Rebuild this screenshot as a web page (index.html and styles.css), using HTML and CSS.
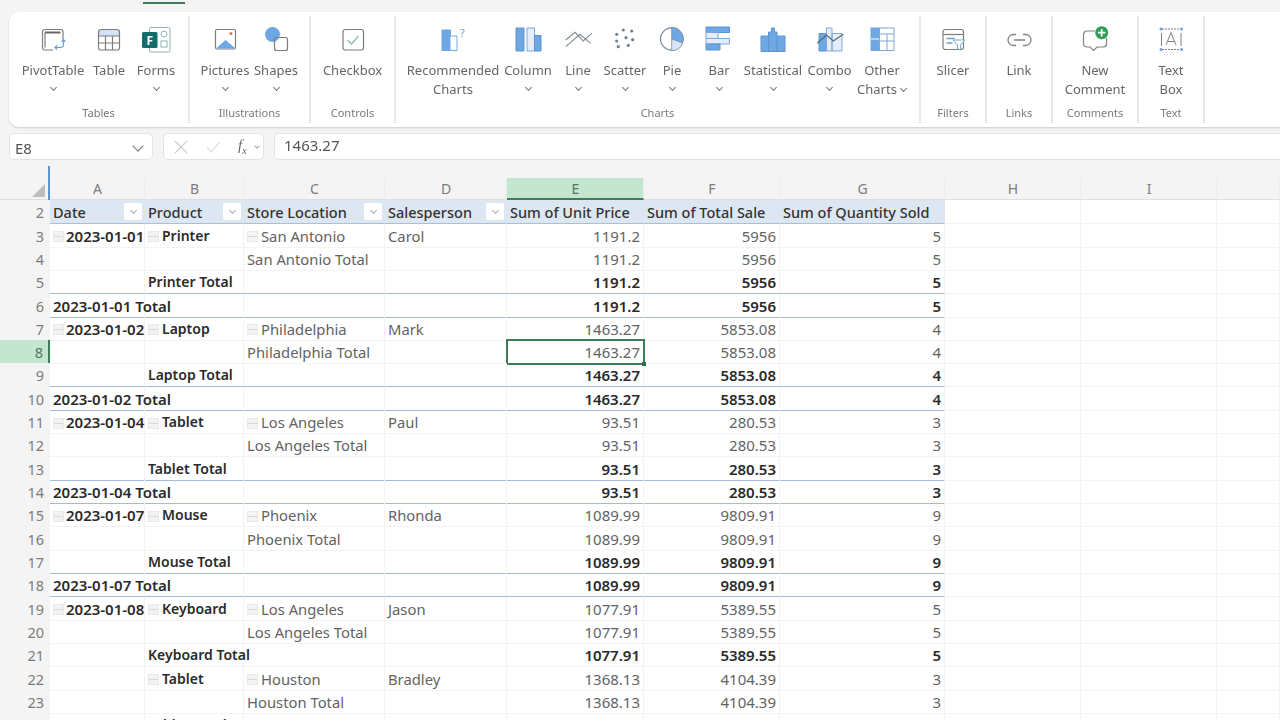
FILE: index.html
```html
<!DOCTYPE html>
<html lang="en">
<head>
<meta charset="utf-8">
<title>Insert ribbon</title>
<link rel="stylesheet" href="styles.css">
</head>
<body>
<div class="app">
  <div class="tabs"><span class="tab-active"></span></div>

  <section class="ribbon">
    <div class="group g-tables">
      <div class="btns">
        <div class="btn w64"><svg class="ic" viewBox="0 0 32 28"><rect x="5.500" y="3.500" width="20.500" height="20.500" rx="2.500" class="ln"/><path d="M8 6.500h15.500" class="ln thick"/><path d="M8 6.500v15" class="ln"/><rect x="16" y="13" width="14" height="13" fill="#fff"/><path d="M26.500 14v4.500a3 3 0 0 1-3 3h-5" class="bl"/><path d="M24.500 16l2-2.500 2 2.500M20 19.500l-2 2 2 2" class="bl"/></svg><span class="lb">PivotTable</span><i class="chev"></i></div>
        <div class="btn w48"><svg class="ic" viewBox="0 0 32 28"><rect x="5.500" y="3.500" width="21" height="20.500" rx="2.500" fill="#d3e2f7"/><path d="M6 10h20v12a1.500 1.500 0 0 1-1.500 1.500h-17A1.500 1.500 0 0 1 6 22z" fill="#fff"/><rect x="5.500" y="3.500" width="21" height="20.500" rx="2.500" class="ln"/><path d="M6 10h20M6 17h20M12.500 10v14M19.500 10v14" class="ln"/></svg><span class="lb">Table</span></div>
        <div class="btn w46"><svg class="ic" viewBox="0 0 32 28"><rect x="9.500" y="1.500" width="20.500" height="24.500" rx="1.500" fill="#fff" stroke="#8db5b3"/><circle cx="24" cy="8" r="3" fill="#fff" stroke="#8db5b3"/><rect x="21" y="15" width="6" height="6" fill="#fff" stroke="#8db5b3"/><rect x="2" y="6" width="15.500" height="16" rx="1.500" fill="#0f6e6a"/><text x="9.700" y="18.500" class="f">F</text></svg><span class="lb">Forms</span><i class="chev"></i></div>
      </div>
      <div class="gname">Tables</div>
    </div>

    <div class="group g-illus">
      <div class="btns">
        <div class="btn w50"><svg class="ic" viewBox="0 0 32 28"><rect x="6.500" y="3.500" width="20" height="19.500" rx="1.500" fill="#fff" class="ln"/><path d="M7 22.500l9.500-8.500 10 8.500z" fill="#6ea8e4"/><circle cx="22" cy="7.500" r="1.500" fill="#d9744a"/></svg><span class="lb">Pictures</span><i class="chev"></i></div>
        <div class="btn w52"><svg class="ic" viewBox="0 0 32 28"><circle cx="12.500" cy="8.500" r="7.500" fill="#6ea8e4"/><rect x="14.500" y="11.500" width="13" height="13" rx="2" fill="#fff" class="ln"/></svg><span class="lb">Shapes</span><i class="chev"></i></div>
      </div>
      <div class="gname">Illustrations</div>
    </div>

    <div class="group g-controls">
      <div class="btns">
        <div class="btn grow"><svg class="ic" viewBox="0 0 32 28"><rect x="6" y="3.500" width="20.500" height="20.500" rx="2.500" class="ln"/><path d="M10.500 14l4 4 7-8" fill="none" stroke="#7fc29e" stroke-width="1.200"/></svg><span class="lb">Checkbox</span></div>
      </div>
      <div class="gname">Controls</div>
    </div>

    <div class="group g-charts">
      <div class="btns">
        <div class="btn w94"><svg class="ic" viewBox="0 0 32 28"><rect x="5" y="4" width="8.500" height="20.500" fill="#6ea8e4" stroke="#6ea8e4"/><path d="M13.500 10h6.500v14.500h-6.500" fill="#fff" stroke="#6ea8e4"/><text x="25.500" y="11" class="q">?</text></svg><span class="lb">Recommended<br>Charts</span></div>
        <div class="btn w56"><svg class="ic" viewBox="0 0 32 28"><path d="M4 2h8v23H4z" class="bf"/><path d="M15 2h7.500v23H15z" class="bw"/><path d="M22.500 9.500H29V25h-6.500z" class="bf"/></svg><span class="lb">Column</span><i class="chev"></i></div>
        <div class="btn w44"><svg class="ic" viewBox="0 0 32 28"><path d="M3.700 14L13 6.300 21.300 15l8.400-7.700M3.700 20.700L18 8.300l10.700 9" fill="none" stroke="#808a94" stroke-width="1.100"/></svg><span class="lb">Line</span><i class="chev"></i></div>
        <div class="btn w50"><svg class="ic dots" viewBox="0 0 32 28"><circle cx="14.300" cy="4" r="1.600"/><circle cx="22.700" cy="5" r="1.600"/><circle cx="7.700" cy="8.300" r="1.600"/><circle cx="17" cy="11.700" r="1.600"/><circle cx="23.700" cy="13.700" r="1.600"/><circle cx="7.700" cy="15" r="1.600"/><circle cx="9.300" cy="20.700" r="1.600"/><circle cx="19.300" cy="19.300" r="1.600"/></svg><span class="lb">Scatter</span><i class="chev"></i></div>
        <div class="btn w44"><svg class="ic" viewBox="0 0 32 28"><circle cx="15.700" cy="13" r="11.200" fill="#fff" stroke="#7f8b99" stroke-width="1.200"/><path d="M15.700 13V1.300A11.700 11.700 0 0 1 26.700 17z" fill="#6ea8e4" stroke="#7f8b99" stroke-width=".8"/><path d="M15.700 13l11 4a11.700 11.700 0 0 1-11 7.700z" fill="#d5e4f8" stroke="#7f8b99" stroke-width=".8"/></svg><span class="lb">Pie</span><i class="chev"></i></div>
        <div class="btn w50"><svg class="ic" viewBox="0 0 32 28"><path d="M3 1h23.500v5.500H3z" class="bf"/><path d="M3 6.500h12v6H3z" class="bw"/><path d="M3 12.500h23.500V18H3z" class="bw"/><path d="M3 18h14v6H3z" class="bf"/></svg><span class="lb">Bar</span><i class="chev"></i></div>
        <div class="btn w58"><svg class="ic" viewBox="0 0 32 28"><path d="M4 10h7.500v15.500H4zM20 10h8v15.500h-8z" class="bf"/><path d="M11.500 6h3V2h3v4H20v19.500h-8.500z" class="bf"/></svg><span class="lb">Statistical</span><i class="chev"></i></div>
        <div class="btn w55"><svg class="ic" viewBox="0 0 32 28"><path d="M5 7.500h7.500V25H5z" class="bf"/><path d="M12.500 2h5.500v23h-5.500zM18 7.500h10V25H18z" class="bw"/><path d="M3.200 17.300L12.500 9l6.700 6 10-6.700" fill="none" stroke="#5c6670" stroke-width="1.200"/></svg><span class="lb">Combo</span><i class="chev"></i></div>
        <div class="btn w50"><svg class="ic" viewBox="0 0 32 28"><rect x="5" y="2" width="23" height="22.500" fill="#fff" stroke="#7fa8d8"/><rect x="5" y="2" width="8.500" height="22.500" fill="#6ea8e4"/><path d="M5 13h8.500" stroke="#fff"/><path d="M13.500 2v22.500M13.500 8h14.500M21 8v16.500M13.500 15h14.500" stroke="#7fa8d8" fill="none"/></svg><span class="lb">Other<br>Charts<i class="chev inl"></i></span></div>
      </div>
      <div class="gname">Charts</div>
    </div>

    <div class="group g-small">
      <div class="btns">
        <div class="btn grow"><svg class="ic" viewBox="0 0 32 28"><rect x="6" y="3.500" width="20.500" height="20" rx="2.500" class="ln"/><path d="M6 8.500h20" class="ln"/><path d="M9.500 12.500h8M9.500 17h6" stroke="#6a9fd8" stroke-width="1.500"/><path d="M16 14h12l-4.500 5v5l-3-1.500V19z" fill="#fff" stroke="#7aa8c8"/></svg><span class="lb">Slicer</span></div>
      </div>
      <div class="gname">Filters</div>
    </div>

    <div class="group g-small">
      <div class="btns">
        <div class="btn grow"><svg class="ic" viewBox="0 0 32 28"><path d="M13 8.500H10.500a5.500 5.500 0 0 0 0 11H13M20 8.500h2.500a5.500 5.500 0 0 1 0 11H20M11 14h11" fill="none" stroke="#808080" stroke-width="1.300"/></svg><span class="lb">Link</span></div>
      </div>
      <div class="gname">Links</div>
    </div>

    <div class="group g-comments">
      <div class="btns">
        <div class="btn grow"><svg class="ic" viewBox="0 0 32 28"><path d="M16 5H8a3.500 3.500 0 0 0-3.500 3.500v9A3.500 3.500 0 0 0 8 21h3l3.500 3.500L18 21h6.500a3 3 0 0 0 3-3v-6" fill="none" stroke="#808080" stroke-width="1.200"/><circle cx="22.700" cy="6.700" r="6.500" fill="#2f9e55"/><path d="M22.700 3v7.400M19 6.700h7.400" stroke="#fff" stroke-width="1.800"/></svg><span class="lb">New<br>Comment</span></div>
      </div>
      <div class="gname">Comments</div>
    </div>

    <div class="group g-small">
      <div class="btns">
        <div class="btn grow"><svg class="ic" viewBox="0 0 32 28"><path d="M7 3h18M7 23.500h18" stroke="#808080" stroke-dasharray="2 1"/><path d="M6.500 7v13M26 7v13" stroke="#808080"/><path d="M11 19l5-12.500L21 19M12.500 15.500h7" fill="none" stroke="#808080"/><g fill="#6ea0d0"><circle cx="6" cy="3" r="1.500"/><circle cx="26.500" cy="3" r="1.500"/><circle cx="6" cy="23.500" r="1.500"/><circle cx="26.500" cy="23.500" r="1.500"/></g></svg><span class="lb">Text<br>Box</span></div>
      </div>
      <div class="gname">Text</div>
    </div>
  </section>

  <div class="fbar">
    <div class="namebox"><span>E8</span><i class="chev big"></i></div>
    <div class="fxbox">
      <svg class="x" viewBox="0 0 16 16"><path d="M1 1l14 14M15 1L1 15"/></svg>
      <svg class="x" viewBox="0 0 18 16"><path d="M1 8l6 6L17 2"/></svg>
      <span class="fx">f<sub>x</sub></span><i class="chev tiny"></i>
    </div>
    <div class="finput">1463.27</div>
  </div>

  <main class="sheet">
    <i class="blue-mark"></i>
    <div class="colheads">
      <div class="corner"><i></i></div><div>A</div><div>B</div><div>C</div><div>D</div><div class="on">E</div><div>F</div><div>G</div><div>H</div><div>I</div><div></div>
    </div>
    <div class="row head"><div>2</div><div>Date<i class="fb"></i></div><div>Product<i class="fb"></i></div><div>Store Location<i class="fb"></i></div><div>Salesperson<i class="fb"></i></div><div>Sum of Unit Price</div><div>Sum of Total Sale</div><div>Sum of Quantity Sold</div><div></div><div></div><div></div></div>
    <div class="row"><div>3</div><div><i class="mn"></i><b>2023-01-01</b></div><div><i class="mn"></i><b>Printer</b></div><div><i class="mn"></i>San Antonio</div><div>Carol</div><div>1191.2</div><div>5956</div><div>5</div><div></div><div></div><div></div></div>
    <div class="row"><div>4</div><div></div><div></div><div>San Antonio Total</div><div></div><div>1191.2</div><div>5956</div><div>5</div><div></div><div></div><div></div></div>
    <div class="row sub rule"><div>5</div><div></div><div>Printer Total</div><div></div><div></div><div>1191.2</div><div>5956</div><div>5</div><div></div><div></div><div></div></div>
    <div class="row sub rule"><div>6</div><div>2023-01-01 Total</div><div></div><div></div><div></div><div>1191.2</div><div>5956</div><div>5</div><div></div><div></div><div></div></div>
    <div class="row"><div>7</div><div><i class="mn"></i><b>2023-01-02</b></div><div><i class="mn"></i><b>Laptop</b></div><div><i class="mn"></i>Philadelphia</div><div>Mark</div><div>1463.27</div><div>5853.08</div><div>4</div><div></div><div></div><div></div></div>
    <div class="row cur"><div>8</div><div></div><div></div><div>Philadelphia Total</div><div></div><div>1463.27</div><div>5853.08</div><div>4</div><div></div><div></div><div></div></div>
    <div class="row sub rule"><div>9</div><div></div><div>Laptop Total</div><div></div><div></div><div>1463.27</div><div>5853.08</div><div>4</div><div></div><div></div><div></div></div>
    <div class="row sub rule"><div>10</div><div>2023-01-02 Total</div><div></div><div></div><div></div><div>1463.27</div><div>5853.08</div><div>4</div><div></div><div></div><div></div></div>
    <div class="row"><div>11</div><div><i class="mn"></i><b>2023-01-04</b></div><div><i class="mn"></i><b>Tablet</b></div><div><i class="mn"></i>Los Angeles</div><div>Paul</div><div>93.51</div><div>280.53</div><div>3</div><div></div><div></div><div></div></div>
    <div class="row"><div>12</div><div></div><div></div><div>Los Angeles Total</div><div></div><div>93.51</div><div>280.53</div><div>3</div><div></div><div></div><div></div></div>
    <div class="row sub rule"><div>13</div><div></div><div>Tablet Total</div><div></div><div></div><div>93.51</div><div>280.53</div><div>3</div><div></div><div></div><div></div></div>
    <div class="row sub rule"><div>14</div><div>2023-01-04 Total</div><div></div><div></div><div></div><div>93.51</div><div>280.53</div><div>3</div><div></div><div></div><div></div></div>
    <div class="row"><div>15</div><div><i class="mn"></i><b>2023-01-07</b></div><div><i class="mn"></i><b>Mouse</b></div><div><i class="mn"></i>Phoenix</div><div>Rhonda</div><div>1089.99</div><div>9809.91</div><div>9</div><div></div><div></div><div></div></div>
    <div class="row"><div>16</div><div></div><div></div><div>Phoenix Total</div><div></div><div>1089.99</div><div>9809.91</div><div>9</div><div></div><div></div><div></div></div>
    <div class="row sub rule"><div>17</div><div></div><div>Mouse Total</div><div></div><div></div><div>1089.99</div><div>9809.91</div><div>9</div><div></div><div></div><div></div></div>
    <div class="row sub rule"><div>18</div><div>2023-01-07 Total</div><div></div><div></div><div></div><div>1089.99</div><div>9809.91</div><div>9</div><div></div><div></div><div></div></div>
    <div class="row"><div>19</div><div><i class="mn"></i><b>2023-01-08</b></div><div><i class="mn"></i><b>Keyboard</b></div><div><i class="mn"></i>Los Angeles</div><div>Jason</div><div>1077.91</div><div>5389.55</div><div>5</div><div></div><div></div><div></div></div>
    <div class="row"><div>20</div><div></div><div></div><div>Los Angeles Total</div><div></div><div>1077.91</div><div>5389.55</div><div>5</div><div></div><div></div><div></div></div>
    <div class="row sub"><div>21</div><div></div><div>Keyboard Total</div><div></div><div></div><div>1077.91</div><div>5389.55</div><div>5</div><div></div><div></div><div></div></div>
    <div class="row"><div>22</div><div></div><div><i class="mn"></i><b>Tablet</b></div><div><i class="mn"></i>Houston</div><div>Bradley</div><div>1368.13</div><div>4104.39</div><div>3</div><div></div><div></div><div></div></div>
    <div class="row"><div>23</div><div></div><div></div><div>Houston Total</div><div></div><div>1368.13</div><div>4104.39</div><div>3</div><div></div><div></div><div></div></div>
    <div class="row sub"><div>24</div><div></div><div>Tablet Total</div><div></div><div></div><div>1368.13</div><div>4104.39</div><div>3</div><div></div><div></div><div></div></div>
  </main>
</div>
</body>
</html>
```
FILE: styles.css
```css
:root {
  --cols: 50px 95px 99px 141px 122px 137px 136px 165px 136px 136px 63px;
}
* { box-sizing: border-box; }
html, body { margin: 0; height: 100%; overflow: hidden; }
body { background: #f4f4f4; font-family: "Noto Sans", "Open Sans", sans-serif; color: #555; }
.app { height: 720px; overflow: hidden; filter: blur(.35px); }

.tabs { height: 12px; padding-left: 143px; padding-top: 2px; }
.tab-active { display: block; width: 42px; height: 2px; background: #3f7d5a; }

.ribbon { display: flex; height: 115px; margin-left: 9px; padding: 4px 0; background: #fff; border-radius: 10px 0 0 10px; box-shadow: 0 1px 2px rgba(0,0,0,.16); }
.group { display: flex; flex-direction: column; border-right: 2px solid #e8e8e8; padding-top: 10px; flex: none; }
.g-tables { width: 181px; }
.g-tables .btns { padding-left: 12px; }
.g-illus { width: 121px; }
.g-illus .btns { padding-left: 10px; }
.g-controls { width: 85px; }
.g-charts { width: 525px; }
.g-charts .btns { padding-left: 10px; }
.g-small { width: 66px; }
.g-comments { width: 86px; }
.btns { display: flex; flex: 1; }
.btn { display: flex; flex-direction: column; align-items: center; flex: none; text-align: center; }
.grow { flex: 1; }
.w44 { width: 44px; } .w46 { width: 46px; } .w48 { width: 48px; } .w50 { width: 50px; } .w52 { width: 52px; }
.w55 { width: 55px; } .w56 { width: 56px; } .w58 { width: 58px; } .w64 { width: 64px; } .w94 { width: 94px; }
.ic { width: 32px; height: 28px; flex: none; margin-bottom: 7px; }
.lb { font-size: 13px; line-height: 18.5px; color: #666; white-space: nowrap; }
.gname { height: 22px; line-height: 24px; font-size: 11px; color: #7a7a7a; text-align: center; }
.chev { display: block; width: 5px; height: 5px; margin-top: 5px; border-right: 1px solid #777; border-bottom: 1px solid #777; transform: rotate(45deg); flex: none; }
.chev.inl { display: inline-block; margin: 0 1px 3px 4px; }
.chev.big { width: 8px; height: 8px; margin-top: -3px; }
.chev.tiny { width: 4px; height: 4px; margin: -2px 0 0 8px; border-color: #aaa; }

.ln { fill: none; stroke: #7d7d7d; stroke-width: 1.2; }
.thick { stroke-width: 2; stroke: #666; }
.bl { fill: none; stroke: #5f9ed8; stroke-width: 1.2; }
.bf { fill: #6ea8e4; stroke: #5f93cc; stroke-width: 1; }
.bw { fill: #e4eefb; stroke: #7fa8d8; stroke-width: 1; }
.dots { fill: #6f8296; }
.f { font: 700 12px "Noto Sans", sans-serif; fill: #fff; text-anchor: middle; }
.q { font: 400 11px "Noto Sans", sans-serif; fill: #7d9cbe; text-anchor: middle; }

.fbar { display: flex; gap: 10px; height: 27px; margin-top: 6px; padding-left: 9px; margin-right: -12px; }
.namebox, .fxbox, .finput { background: #fff; border: 1px solid #e3e3e3; border-radius: 5px; display: flex; align-items: center; font-size: 15px; color: #555; }
.namebox { width: 144px; justify-content: space-between; padding: 2px 10px 0 5px; }
.fxbox { width: 101px; padding-left: 10px; color: #bbb; }
.x { width: 14px; height: 14px; margin-right: 18px; fill: none; stroke: #c4c4c4; stroke-width: 1.2; }
.fx { font: italic 15px "Liberation Serif", serif; color: #666; }
.fx sub { font-size: 10px; }
.finput { flex: 1; padding: 0 0 3px 9px; }

.sheet { position: relative; margin-top: 18px; background: #fff; }
.blue-mark { position: absolute; left: 48px; top: -12px; width: 2px; height: 34px; background: #5b93cc; z-index: 2; }
.colheads { display: grid; grid-template-columns: var(--cols); height: 22.2px; background: #f4f4f4; border-bottom: 1px solid #dedede; }
.colheads > div { border-right: 1px solid #ececec; padding-left: 1px; text-align: center; font-size: 14px; line-height: 22px; color: #7c7c7c; }
.colheads .on { background: #c4e6d0; border-bottom: 2px solid #3f7d5a; color: #4d7a60; height: 22px; }
.corner { position: relative; }
.corner i { position: absolute; right: 4px; bottom: 3px; width: 0; height: 0; border-left: 13px solid transparent; border-bottom: 13px solid #bdbdbd; }

.row { display: grid; grid-template-columns: var(--cols); height: 23.33px; font-size: 14.8px; line-height: 22px; }
.row > div { position: relative; padding: 1px 2px 0 3px; white-space: nowrap; border-right: 1px solid #f3f3f3; border-bottom: 1px solid #f3f3f3; display: flex; align-items: center; color: #636363; }
.row > div:first-child { justify-content: flex-end; padding-right: 5px; background: #f4f4f4; color: #7c7c7c; font-size: 14.5px; }
.row > div:nth-child(n+6):nth-child(-n+8) { justify-content: flex-end; padding-right: 3px; font-size: 15px; }
b { font-weight: 600; color: #2a2a2a; }
.row > div:nth-child(3) b { font-size: 14px; }
.row > div:nth-child(2) b { font-size: 15px; }
.sub > div { font-weight: 600; color: #2a2a2a !important; }
.sub > div:nth-child(2) { font-size: 15px; }
.sub > div:nth-child(3) { font-size: 14px; }
.sub > div:first-child { font-weight: 400; color: #7c7c7c !important; }
.rule > div:nth-child(n+2):nth-child(-n+8) { border-bottom-color: #a6b9dd; }
.mn { flex: none; position: relative; width: 11px; height: 11px; margin: 2px 2px 0 0; background: #f3f3f3; border: 1px solid #e9e9e9; }
.row > div:nth-child(n+3) .mn { margin-right: 3px; }
.mn::after { content: ""; position: absolute; left: 0; right: 0; top: 4px; height: 1px; background: #d8d8d8; }

.head > div:nth-child(n+2):nth-child(-n+8) { background: #dde7f2; border-right-color: #dde7f2; border-bottom: 1px solid #a9bfdc; color: #333; font-weight: 500; font-size: 14.5px; justify-content: flex-start; }
.fb { position: absolute; right: 2px; top: 3px; width: 18px; height: 17px; background: #fff; border-radius: 2px; }
.fb::after { content: ""; position: absolute; left: 7px; top: 5px; width: 4px; height: 4px; border-right: 1px solid #aaa; border-bottom: 1px solid #aaa; transform: rotate(45deg); }

.cur > div:first-child { background: #c4e6d0; color: #4d7a60; border-right: 2px solid #3f7d5a; }
.cur > div:nth-child(6)::after { content: ""; position: absolute; left: -1px; top: -1px; right: -2px; bottom: -2px; border: 2px solid #3f7d5a; }
.cur > div:nth-child(6)::before { content: ""; position: absolute; right: -3px; bottom: -3px; width: 4px; height: 4px; background: #2e6d4a; z-index: 1; }
```
